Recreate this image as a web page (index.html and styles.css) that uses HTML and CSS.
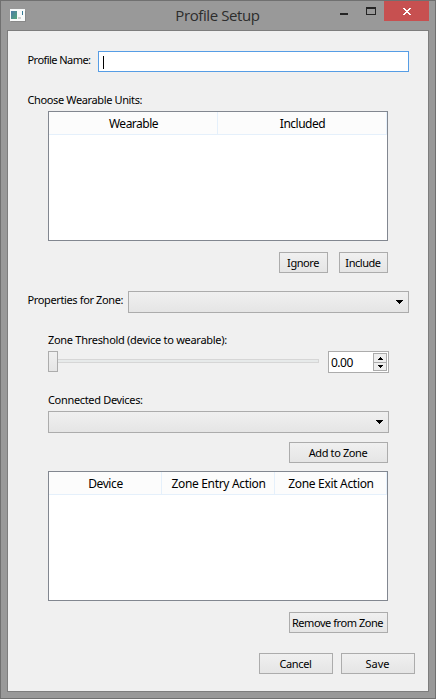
FILE: index.html
```html
<!DOCTYPE html>
<html lang="en">
<head>
<meta charset="utf-8">
<title>Profile Setup</title>
<link rel="stylesheet" href="styles.css">
</head>
<body>
<div class="window">
  <header class="titlebar">
    <svg class="app-icon" width="17" height="14" viewBox="0 0 17 14">
      <defs><linearGradient id="screen" x1="0" y1="0" x2="1" y2="1"><stop offset="0" stop-color="#4a7aa8"/><stop offset="1" stop-color="#55a779"/></linearGradient></defs>
      <rect x="1" y="2" width="15" height="11" fill="#777" opacity=".5"/>
      <rect x="0" y="0" width="15" height="12" fill="#f8fafa"/>
      <rect x="1" y="2" width="6" height="8" fill="url(#screen)"/>
      <rect x="8" y="8" width="3" height="2" fill="#d0d0d0"/>
      <path d="M12.5 2v4" stroke="#367b96"/>
    </svg>
    <h1 class="title"><span>Profile Setup</span></h1>
    <div class="controls">
      <svg width="37" height="20" viewBox="0 0 37 20"><path d="M0 12h8v2H0z" fill="#242424"/><path d="M26 6h10v8H26zM27 8v5h8V8z" fill="#242424" fill-rule="evenodd"/></svg>
      <div class="close"><svg width="8" height="7" viewBox="0 0 8 7" shape-rendering="crispEdges"><path fill="#fff" d="M0 0h2v1h1v1h2V1h1V0h2v1H7v1H6v1H5v1h1v1h1v1h1v1H6V6H5V5H3v1H2v1H0V6h1V5h1V4h1V3H2V2H1V1H0z"/></svg></div>
    </div>
  </header>
  <main class="panel">
    <div class="row name-row"><label class="l-name">Profile Name:</label><div class="input"><i class="caret"></i></div></div>
    <div class="label l-choose">Choose Wearable Units:</div>
    <div class="table two"><div class="th"><span class="h-wear">Wearable</span></div><div class="th"><span class="h-inc">Included</span></div></div>
    <div class="buttons small"><div class="btn"><span class="b-ign">Ignore</span></div><div class="btn"><span class="b-inc">Include</span></div></div>
    <div class="row zone-row"><label class="l-prop">Properties for Zone:</label><div class="combo"><svg width="7" height="4" viewBox="0 0 7 4" shape-rendering="crispEdges"><path d="M0 0h7v1H6v1H5v1H4v1H3V3H2V2H1V1H0z"/></svg></div></div>
    <div class="label inner l-thr">Zone Threshold (device to wearable):</div>
    <div class="row slider-row">
      <div class="handle"></div><div class="groove"></div>
      <div class="spin"><span class="value">0.00</span><div class="steps"><div class="step"><svg width="5" height="3" viewBox="0 0 5 3"><path d="M2 0h1v1h1v1h1v1H0V2h1V1h1z"/></svg></div><div class="step"><svg width="5" height="3" viewBox="0 0 5 3"><path d="M0 0h5v1H4v1H3v1H2V2H1V1H0z"/></svg></div></div></div>
    </div>
    <div class="label inner l-conn">Connected Devices:</div>
    <div class="combo device-combo"><svg width="7" height="4" viewBox="0 0 7 4" shape-rendering="crispEdges"><path d="M0 0h7v1H6v1H5v1H4v1H3V3H2V2H1V1H0z"/></svg></div>
    <div class="buttons add"><div class="btn wide"><span class="b-add">Add to Zone</span></div></div>
    <div class="table three"><div class="th"><span class="h-dev">Device</span></div><div class="th"><span class="h-entry">Zone Entry Action</span></div><div class="th"><span class="h-exit">Zone Exit Action</span></div></div>
    <div class="buttons remove"><div class="btn wide"><span class="b-rem">Remove from Zone</span></div></div>
    <div class="buttons footer"><div class="btn"><span class="b-can">Cancel</span></div><div class="btn"><span class="b-save">Save</span></div></div>
  </main>
</div>
</body>
</html>
```
FILE: styles.css
```css
* { box-sizing: border-box; }
body { margin: 0; font: 11px/14px "Noto Sans", sans-serif; color: #000; }
svg { display: block; flex: none; }
span, label, .label { white-space: nowrap; }
.window { width: 436px; height: 699px; background: #999; border: 1px solid #707070; padding: 0 6px 6px; }
.titlebar { height: 29px; display: flex; position: relative; }
.app-icon { margin: 8px 0 0 3px; }
.title { position: absolute; left: 0; right: 1px; top: 4px; margin: 0; text-align: center; font: 15px/20px "Open Sans", sans-serif; letter-spacing: -0.4px; color: #2d2d2d; }
.controls { margin-left: auto; display: flex; }
.controls > svg { margin-right: 7px; }
.close { width: 45px; height: 20px; background: #c75050; display: flex; align-items: center; justify-content: center; padding-left: 1px; }
.panel { height: 662px; background: #f0f0f0; border: 1px solid #7d7d7d; padding: 20px 19px 0 20px; display: flex; flex-direction: column; }
.row { display: flex; }
.name-row { height: 21px; }
.name-row label { width: 70px; padding-top: 2px; }
.input { flex: 1; background: #fff; border: 1px solid #569de5; padding: 4px; }
.caret { display: block; width: 1px; height: 13px; background: #000; }
.label { height: 14px; }
.l-choose { margin-top: 21px; }
.inner { margin-left: 20px; }
.table { margin: 4px 21px 0 20px; height: 130px; background: #fff; border: 1px solid #828790; display: grid; grid-auto-rows: 23px; font-size: 12px; flex: none; }
.two { grid-template-columns: 169px 1fr; }
.three { grid-template-columns: 113px 113px 1fr; margin-top: 8px; }
.th { background: #fcfcfc; border-right: 1px solid #e5f0fb; border-bottom: 1px solid #e5f0fb; display: flex; justify-content: center; align-items: center; padding: 2px 0 0 1px; }
.buttons { display: flex; justify-content: flex-end; gap: 11px; margin: 11px 21px 0 0; height: 21px; }
.btn { width: 49px; border: 1px solid #acacac; background: linear-gradient(#f0f0f0, #e5e5e5); display: flex; justify-content: center; align-items: center; }
.wide { width: 99px; }
.zone-row { margin-top: 18px; height: 22px; }
.zone-row label { width: 100px; padding-top: 2px; }
.combo { flex: 1; height: 22px; border: 1px solid #acacac; background: linear-gradient(#f0f0f0, #e5e5e5); display: flex; align-items: center; justify-content: flex-end; padding-right: 5px; }
.l-thr { margin-top: 20px; }
.slider-row { margin: 4px 20px 0 20px; height: 22px; }
.handle { width: 10px; height: 21px; border: 1px solid #acacac; background: linear-gradient(#f0f0f0, #e5e5e5); }
.groove { flex: 1; height: 4px; margin: 8px 9px 0 0; border: 1px solid #d6d6d6; border-left: 0; background: #e7eaea; }
.spin { width: 61px; border: 1px solid #acacac; background: #fff; display: flex; justify-content: space-between; padding: 1px 1px 1px 2px; }
.value { padding-top: 3px; font-size: 12px; line-height: 14px; }
.steps { width: 14px; height: 18px; border: 1px solid #acacac; display: grid; grid-template-rows: 8px 8px; }
.step { display: flex; align-items: center; justify-content: center; background: #eee; }
.step + .step { border-top: 1px solid #acacac; }
.l-conn { margin-top: 20px; }
.device-combo { flex: none; margin: 4px 20px 0 20px; }
.add { margin-top: 9px; }
.footer { margin: 20px -6px 0 0; gap: 8px; }
.footer .btn { width: 74px; }

/* Tracking per caption, in line with the compact dialog font */
.l-name { letter-spacing: -0.55px; }
.l-choose { letter-spacing: -0.37px; }
.l-prop { letter-spacing: -0.37px; }
.l-name, .l-choose, .l-prop { text-indent: -0.5px; }
.l-thr { letter-spacing: -0.29px; }
.l-conn { letter-spacing: -0.33px; }
.b-ign, .b-inc { letter-spacing: -0.45px; }
.b-ign { padding-right: 1px; }
.b-inc { padding-right: 1px; }
.b-add { letter-spacing: -0.38px; padding-right: 1px; }
.b-rem { letter-spacing: -0.45px; padding-right: 2px; }
.b-can { letter-spacing: -0.35px; padding-right: 1px; }
.b-save { padding-right: 1px; }
.h-wear, .h-inc { letter-spacing: -0.5px; }
.h-dev { letter-spacing: -0.4px; }
.h-entry, .h-exit { letter-spacing: -0.32px; }
.value { letter-spacing: -0.5px; }
```
